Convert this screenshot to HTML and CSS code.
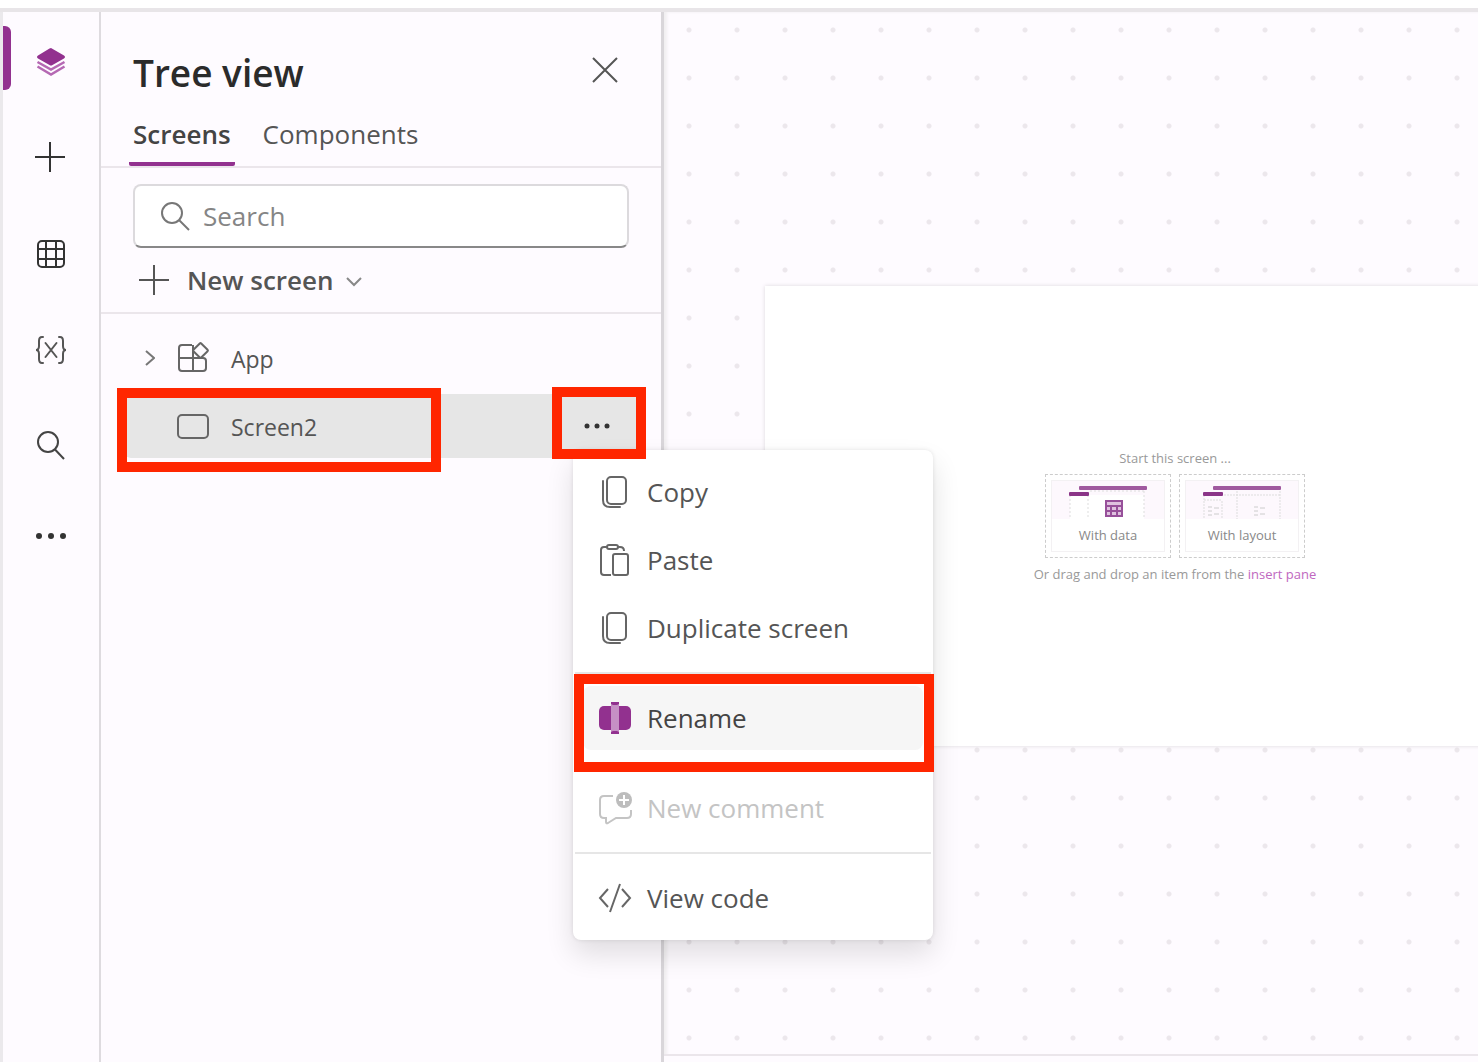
FILE: index.html
```html
<!DOCTYPE html>
<html lang="en">
<head>
<meta charset="utf-8">
<title>Tree view</title>
<link rel="stylesheet" href="styles.css">
</head>
<body>
<div class="topbar"></div>
<div class="workspace">
  <nav class="rail" aria-label="Tools">
    <button class="rail-item active" aria-label="Tree view">
      <svg width="32" height="32" viewBox="0 0 32 32"><path d="M16 2 29 9.500Q31 11 29 12.500L17.500 19Q16 20 14.500 19L3 12.500Q1 11 3 9.500L14.500 2.500Q16 1.500 17.500 2.500Z" fill="#92318f"/><path d="M2.500 16 16 23.500 29.500 16M2.500 20.500 16 28.500 29.500 20.500" fill="none" stroke="#b568b3" stroke-width="2.500"/></svg>
    </button>
    <button class="rail-item" aria-label="Insert">
      <svg width="32" height="32" viewBox="0 0 32 32"><path d="M15 0v30M0 15h30" stroke="#333" stroke-width="2"/></svg>
    </button>
    <button class="rail-item" aria-label="Data">
      <svg width="32" height="32" viewBox="0 0 32 32" fill="none" stroke="#333" stroke-width="2"><rect x="3" y="3" width="26" height="26" rx="4"/><path d="M11 3v26M21 3v26M3 11h26M3 21h26"/></svg>
    </button>
    <button class="rail-item" aria-label="Variables">
      <svg width="34" height="32" viewBox="0 0 34 32" fill="none" stroke="#555" stroke-width="2" stroke-linecap="round"><path d="M9 3H8Q5 3 5 7v5Q5 16 2 16Q5 16 5 20v5Q5 29 8 29h1M25 3h1q3 0 3 4v5q0 4 3 4q-3 0-3 4v5q0 4-3 4h-1M11.500 9l11 14M22.500 9l-11 14"/></svg>
    </button>
    <button class="rail-item" aria-label="Search">
      <svg width="32" height="32" viewBox="0 0 32 32" fill="none" stroke="#444" stroke-width="2"><circle cx="13" cy="12" r="10"/><path d="M20 19.500 29 29"/></svg>
    </button>
    <button class="rail-item more" aria-label="More">
      <svg width="32" height="8" viewBox="0 0 32 8" fill="#333"><circle cx="4" cy="4" r="3"/><circle cx="16" cy="4" r="3"/><circle cx="28" cy="4" r="3"/></svg>
    </button>
  </nav>

  <aside class="panel">
    <header class="panel-head">
      <h1>Tree view</h1>
      <button class="close" aria-label="Close">
        <svg width="26" height="26" viewBox="0 0 26 26"><path d="M1 1 25 25M25 1 1 25" stroke="#555" stroke-width="2"/></svg>
      </button>
    </header>
    <div class="tabs" role="tablist">
      <button class="tab selected" role="tab" aria-selected="true">Screens</button>
      <button class="tab" role="tab" aria-selected="false">Components</button>
    </div>
    <label class="search">
      <svg width="30" height="30" viewBox="0 0 30 30" fill="none" stroke="#777" stroke-width="2"><circle cx="11" cy="12" r="10"/><path d="M18 19 28 29"/></svg>
      <input type="text" placeholder="Search" aria-label="Search">
    </label>
    <div class="new-row">
      <button class="new-screen">
        <svg width="30" height="30" viewBox="0 0 30 30"><path d="M15 0v30M0 15h30" stroke="#555" stroke-width="2"/></svg>
        <span>New screen</span>
        <svg width="16" height="14" viewBox="0 0 16 14"><path d="M1 5 8 12 15 5" fill="none" stroke="#888" stroke-width="2"/></svg>
      </button>
    </div>
    <ul class="tree">
      <li class="tree-row">
        <button class="expand" aria-label="Expand App"><svg width="12" height="18" viewBox="0 0 12 18"><path d="M3 2 11 9 3 16" fill="none" stroke="#777" stroke-width="2"/></svg></button>
        <svg class="node-icon" width="34" height="34" viewBox="0 0 34 34" fill="none" stroke="#666" stroke-width="2"><path d="M16 4H6Q3 4 3 7v20q0 3 3 3h21q3 0 3-3v-7q0-3-3-3H3M17 4v26"/><rect x="19" y="4" width="11" height="11" rx="1" fill="#fefbff" transform="rotate(45 24.500 9.500)"/></svg>
        <span>App</span>
      </li>
      <li class="tree-row current">
        <span class="expand"></span>
        <svg class="node-icon" width="34" height="34" viewBox="0 0 34 34" fill="none" stroke="#666" stroke-width="2"><rect x="2" y="6" width="30" height="23" rx="4"/></svg>
        <span>Screen2</span>
        <button class="row-more" aria-label="More options">
          <svg width="26" height="6" viewBox="0 0 26 6" fill="#333"><circle cx="3" cy="3" r="2.500"/><circle cx="13" cy="3" r="2.500"/><circle cx="23" cy="3" r="2.500"/></svg>
        </button>
        <div class="mark mark-row"></div>
        <div class="mark mark-more"></div>
        <div class="menu" role="menu">
          <button class="menu-item" role="menuitem"><svg width="34" height="34" viewBox="0 0 34 34" fill="none" stroke="#666" stroke-width="2"><rect x="9" y="2" width="19" height="27" rx="4"/><path d="M5 6v19q0 7 7 7h10" stroke-linecap="round"/></svg>Copy</button>
          <button class="menu-item" role="menuitem"><svg width="34" height="34" viewBox="0 0 34 34" fill="none" stroke="#666" stroke-width="2"><path d="M9 4H6Q3 4 3 7v22q0 3 3 3h7M19 4h3q4 0 4 4"/><rect x="9" y="2" width="11" height="4" rx="2"/><rect x="15" y="11" width="15" height="21" rx="2"/></svg>Paste</button>
          <button class="menu-item" role="menuitem"><svg width="34" height="34" viewBox="0 0 34 34" fill="none" stroke="#666" stroke-width="2"><rect x="9" y="2" width="19" height="27" rx="4"/><path d="M5 6v19q0 7 7 7h10" stroke-linecap="round"/></svg>Duplicate screen</button>
          <hr>
          <button class="menu-item hover" role="menuitem"><svg width="34" height="34" viewBox="0 0 34 34"><rect x="1" y="5" width="32" height="24" rx="5" fill="#92318f"/><rect x="13" y="3" width="8" height="28" fill="#c690c5"/><path d="M13 1h8v2l-2 1h-4l-2-1zM13 33h8v-2l-2-1h-4l-2 1z" fill="#92318f"/></svg>Rename<span class="mark mark-item"></span></button>
          <hr>
          <button class="menu-item" role="menuitem" disabled><svg width="34" height="34" viewBox="0 0 34 34" fill="none" stroke="#c4c4c4" stroke-width="2"><path d="M15 5H6Q2 5 2 9v14q0 4 4 4h2v4q0 2 2 1l8-5h11q4 0 4-4v-4"/><circle cx="26" cy="9" r="8" fill="#bdbdbd" stroke="none"/><path d="M26 4v10M21 9h10" stroke="#fff"/></svg>New comment</button>
          <hr>
          <button class="menu-item" role="menuitem"><svg width="34" height="34" viewBox="0 0 34 34" fill="none" stroke="#666" stroke-width="2"><path d="M10 8 2 17l8 9M24 8l8 9-8 9M22 3 12 31"/></svg>View code</button>
        </div>
      </li>
    </ul>
  </aside>

  <main class="canvas">
    <section class="screen">
      <p class="hint">Start this screen ...</p>
      <div class="starters">
        <button class="starter">
          <span class="starter-inner">
            <svg class="starter-art" viewBox="0 0 112 38"><rect width="112" height="38" fill="#fdf8fd"/><path d="M18 14h74v24H18z" fill="#fff"/><path d="M18 14v24M36 14v24M92 10v28M38 10h54" stroke="#ddd" stroke-dasharray="2 2"/><rect x="27" y="5" width="68" height="4" rx="1" fill="#a05a9f"/><rect x="17" y="11" width="20" height="4" rx="1" fill="#8b3588"/><path d="M54 20h16v15H54z" fill="#dfc2df"/><path d="M54 20h16v15H54zM54 25h16M54 30h16M59 24v11M65 24v11" fill="none" stroke="#97509a" stroke-width="2"/></svg>
            <span>With data</span>
          </span>
        </button>
        <button class="starter">
          <span class="starter-inner">
            <svg class="starter-art" viewBox="0 0 112 38"><rect width="112" height="38" fill="#fdf8fd"/><path d="M18 14v24M36 20v18M51 10v28M94 10v28M18 19h18M38 14h56" fill="none" stroke="#ddd" stroke-dasharray="2 1"/><path d="M22 26h4M22 30h4M22 34h4M28 27h5M28 33h5M68 26h4M68 30h4M68 34h4M74 27h5M74 33h5" stroke="#ccc"/><rect x="27" y="5" width="68" height="4" rx="1" fill="#a05a9f"/><rect x="17" y="11" width="20" height="4" rx="1" fill="#8b3588"/></svg>
            <span>With layout</span>
          </span>
        </button>
      </div>
      <p class="hint">Or drag and drop an item from the <a href="#">insert pane</a></p>
    </section>
    <footer class="statusbar"></footer>
  </main>
</div>
</body>
</html>
```
FILE: styles.css
```css
* { box-sizing: border-box; }

body {
  margin: 0;
  height: 100vh;
  overflow: hidden;
  display: flex;
  flex-direction: column;
  background: #fefbff;
  color: #555;
  font-family: "Open Sans", "Noto Sans", sans-serif;
}

button {
  border: 0;
  padding: 0;
  background: none;
  color: inherit;
  font: inherit;
}

svg { display: block; flex: none; }
h1, p, ul { margin: 0; padding: 0; }

.topbar {
  height: 12px;
  flex: none;
  background: #fff;
  border-bottom: 4px solid #e8e5e8;
}

.workspace {
  flex: 1;
  min-height: 0;
  display: flex;
  border-left: 3px solid #ebe9ec;
}

/* Left icon rail */
.rail {
  width: 98px;
  flex: none;
  padding-top: 2px;
  border-right: 2px solid #dedbdf;
}

.rail-item {
  position: relative;
  width: 96px;
  height: 96px;
  display: flex;
  align-items: center;
  justify-content: center;
}

.rail-item.more { height: 84px; }

.rail-item.active::before {
  content: "";
  position: absolute;
  left: 0;
  top: 12px;
  width: 8px;
  height: 64px;
  border-radius: 0 6px 6px 0;
  background: #92318f;
}

/* Tree view panel */
.panel {
  position: relative;
  z-index: 1;
  width: 563px;
  flex: none;
  border-right: 3px solid #d9d6da;
}

.panel-head {
  height: 96px;
  padding: 0 43px 0 32px;
  display: flex;
  align-items: center;
  justify-content: space-between;
}

h1 {
  padding-top: 26px;
  font-size: 37px;
  line-height: 48px;
  font-weight: 600;
  color: #2b2b2b;
}

.close { padding-top: 20px; }

.tabs {
  height: 60px;
  padding-left: 28px;
  display: flex;
  gap: 24px;
  border-bottom: 2px solid #ebe6eb;
}

.tab {
  height: 58px;
  padding: 0 4px 2px;
  border-bottom: 4px solid transparent;
  font-size: 26px;
  line-height: 52px;
}

.tab.selected {
  border-color: #92318f;
  border-radius: 2px;
  font-weight: 600;
  color: #444;
}

.search {
  height: 64px;
  margin: 16px 32px 0;
  padding: 0 26px;
  display: flex;
  align-items: center;
  gap: 12px;
  border: 2px solid #dcdadd;
  border-bottom-color: #888;
  border-radius: 8px;
  background: #fff;
}

.search input {
  flex: 1;
  min-width: 0;
  padding: 0;
  border: 0;
  outline: 0;
  background: none;
  font: inherit;
  font-size: 26px;
}

.search input::placeholder { color: #858585; }

.new-row {
  height: 66px;
  padding-left: 38px;
  border-bottom: 2px solid #ebe6eb;
}

.new-screen {
  height: 64px;
  display: flex;
  align-items: center;
  gap: 18px;
  font-size: 26px;
  font-weight: 600;
}

.new-screen span { margin-right: -6px; }

.tree {
  padding: 12px 16px 0 24px;
  list-style: none;
}

.tree-row {
  position: relative;
  height: 64px;
  margin-bottom: 4px;
  padding-left: 18px;
  display: flex;
  align-items: center;
  border-radius: 6px;
  font-size: 23px;
}

.tree-row > span { padding-top: 2px; }
.tree-row.current { background: #e6e6e6; }
.expand { width: 33px; }
.node-icon { margin-right: 21px; }

.row-more {
  width: 96px;
  height: 64px;
  margin-left: auto;
  display: flex;
  align-items: center;
  justify-content: center;
}

/* Red callout frames */
.mark {
  position: absolute;
  z-index: 3;
  border: 10px solid #ff2600;
  pointer-events: none;
}

.mark-row { left: -8px; top: -6px; width: 324px; height: 84px; }
.mark-more { right: -1px; top: -7px; width: 94px; height: 72px; }
.mark-item { left: -9px; right: -11px; top: -12px; height: 98px; }

/* Context menu */
.menu {
  position: absolute;
  z-index: 2;
  left: 448px;
  top: 56px;
  width: 360px;
  padding: 10px;
  display: flex;
  flex-direction: column;
  gap: 4px;
  border-radius: 8px;
  background: #fff;
  box-shadow: 0 14px 28px rgba(0, 0, 0, 0.12), 0 0 4px rgba(0, 0, 0, 0.1);
}

.menu-item {
  position: relative;
  height: 64px;
  padding-left: 15px;
  display: flex;
  align-items: center;
  gap: 15px;
  border-radius: 8px;
  font-size: 26px;
}

.menu-item.hover { background: #f6f6f6; color: #444; }
.menu-item:disabled { color: #c4c4c4; }

.menu hr {
  height: 2px;
  margin: 8px -8px;
  border: 0;
  background: #e6e6e6;
}

/* Canvas */
.canvas {
  flex: 1;
  min-width: 0;
  padding-top: 274px;
  display: flex;
  flex-direction: column;
  overflow: hidden;
  background: radial-gradient(circle, #ece7ec 2px, transparent 3px) 1px -6px / 48px 48px;
  box-shadow: inset 3px 0 3px #f1eff1;
}

.screen {
  width: 820px;
  height: 460px;
  flex: none;
  margin-left: 101px;
  display: flex;
  flex-direction: column;
  align-items: center;
  justify-content: center;
  gap: 6px;
  background: #fff;
  box-shadow: 0 0 4px #ddd8dd;
}

.hint {
  font-size: 13px;
  line-height: 20px;
  color: #999;
}

.hint a { color: #c067c0; text-decoration: none; }

.starters { display: flex; gap: 8px; }

.starter {
  width: 126px;
  height: 84px;
  padding: 5px;
  border: 1px dashed #ccc;
}

.starter-inner {
  height: 72px;
  display: flex;
  flex-direction: column;
  border: 1px solid #f3f1f3;
  font-size: 13px;
  line-height: 32px;
  color: #888;
}

.starter-art { width: 100%; }

.statusbar {
  height: 8px;
  margin-top: auto;
  border-top: 2px solid #ebe6eb;
  background: #fefbff;
}
```
